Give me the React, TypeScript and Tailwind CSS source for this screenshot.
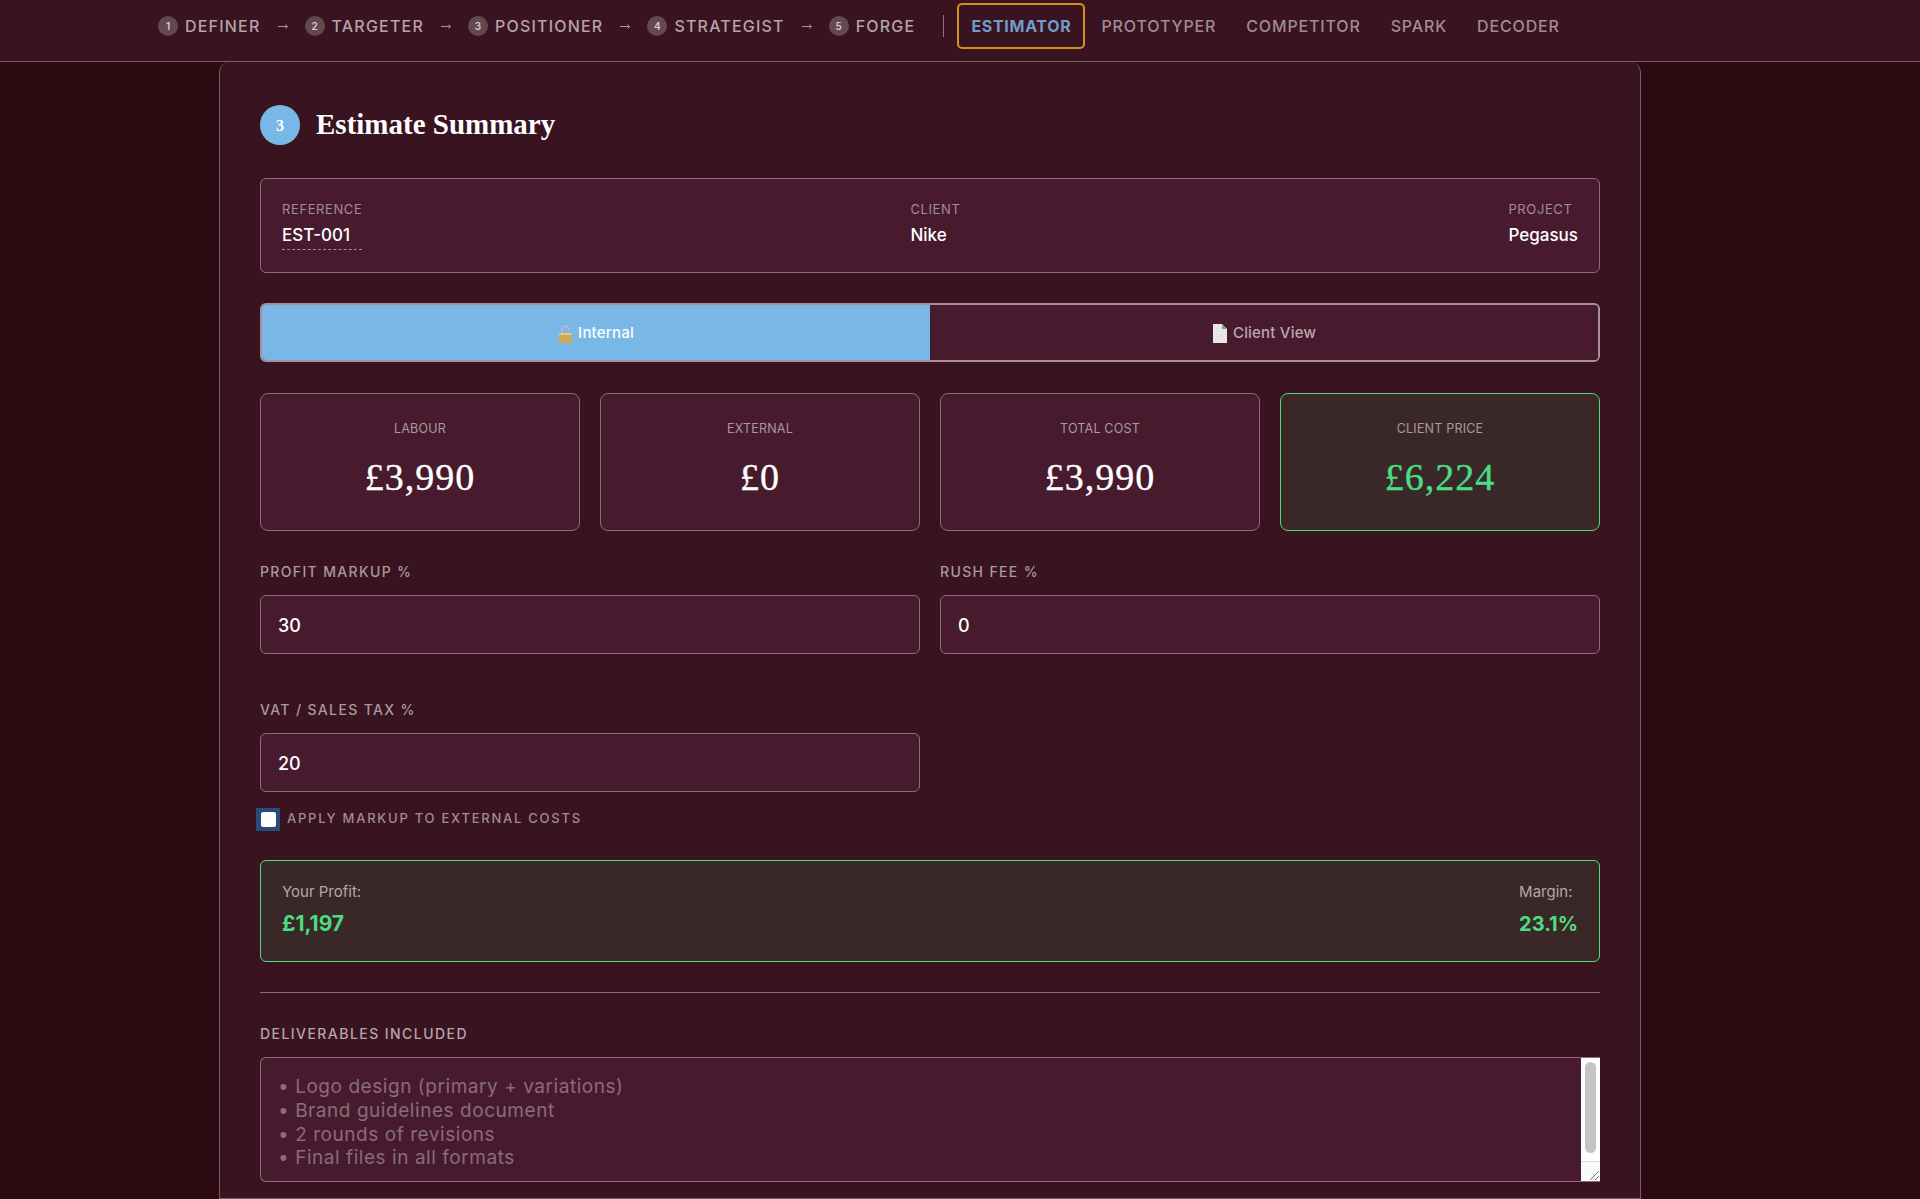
import React from "react";

const sans = "font-['Inter','Liberation_Sans',sans-serif]";
const serif = "font-['Liberation_Serif','DejaVu_Serif',serif]";

const steps = [
  { n: "1", label: "DEFINER" },
  { n: "2", label: "TARGETER" },
  { n: "3", label: "POSITIONER" },
  { n: "4", label: "STRATEGIST" },
  { n: "5", label: "FORGE" },
];

function Nav() {
  return (
    <nav className="flex h-[62px] shrink-0 items-center border-b border-[#7d5a69] bg-[#3a1320] pb-[9px] pl-[158px]">
      {steps.map((s, i) => (
        <React.Fragment key={s.n}>
          <div className="flex items-center gap-[7px]">
            <span className="flex h-[20px] w-[20px] items-center justify-center rounded-full bg-[#65484f] text-[10px] font-semibold text-[#d8ccd0]">
              {s.n}
            </span>
            <span className="text-[16px] font-medium leading-none tracking-[1.2px] text-[#b3a3aa]">{s.label}</span>
          </div>
          {i < steps.length - 1 && (
            <span className="flex w-[44px] items-center justify-center">
              <svg width="10" height="7" viewBox="0 0 10 7" fill="none" stroke="#a8979f" strokeWidth="1">
                <path d="M0 3.5h9.5M7.5 1.5l2 2-2 2" />
              </svg>
            </span>
          )}
        </React.Fragment>
      ))}
      <span className="ml-[28px] mr-[13px] h-[22px] w-px bg-[#8a7480]" />
      <span className="flex h-[46px] items-center rounded-[5px] border-2 border-[#d4921c] px-[12px] text-[16px] font-bold leading-none tracking-[0.7px] text-[#6f9cc8]">
        ESTIMATOR
      </span>
      <div className="ml-[16px] flex items-center gap-[30px] text-[16px] font-medium leading-none tracking-[0.85px] text-[#a08c95]">
        <span>PROTOTYPER</span>
        <span>COMPETITOR</span>
        <span>SPARK</span>
        <span>DECODER</span>
      </div>
    </nav>
  );
}

function Meta({ label, value, dashed }: { label: string; value: string; dashed?: boolean }) {
  return (
    <div>
      <div className="text-[13px] leading-[16px] tracking-[0.6px] text-[#a08c95]">{label}</div>
      <div className={`mt-[5px] text-[17px] font-medium leading-[26px] text-white ${dashed ? "border-b border-dashed border-[#a08c95] pb-[1px]" : ""}`}>
        {value}
      </div>
    </div>
  );
}

function Stat({ label, value, green }: { label: string; value: string; green?: boolean }) {
  return (
    <div
      className={`flex h-[138px] flex-col items-center rounded-[8px] border pt-[27px] ${
        green ? "border-[#4ade80] bg-[#3a2829]" : "border-[#8f6b7a] bg-[#471b2d]"
      }`}
    >
      <div className="text-[12.5px] leading-[16px] tracking-[0.2px] text-[#a89a9f]">{label}</div>
      <div
        className={`${serif} mt-[18px] text-[38px] leading-[44px] tracking-[1px] [-webkit-text-stroke:0.35px_currentColor] ${
          green ? "text-[#4ade80]" : "text-white"
        }`}
      >
        {value}
      </div>
    </div>
  );
}

function Field({ label, value }: { label: string; value: string }) {
  return (
    <div>
      <div className="text-[14px] font-medium leading-[16px] tracking-[1.35px] text-[#a89a9f]">{label}</div>
      <div className="mt-[15px] flex h-[59px] items-center rounded-[6px] border border-[#8f6b7a] bg-[#471b2d] px-[17px] pt-[1px] text-[18px] font-medium text-white">
        {value}
      </div>
    </div>
  );
}

function LockIcon() {
  return (
    <svg width="15" height="18" viewBox="0 0 15 18">
      <path d="M4 8V4.5a3.5 3.5 0 0 1 7 0V5" fill="none" stroke="#b9bcc4" strokeWidth="1.5" />
      <rect x="1" y="8" width="13" height="10" rx="1" fill="#c9ab55" />
      <rect x="1" y="8" width="13" height="2" fill="#e2cb7e" />
    </svg>
  );
}

function FileIcon() {
  return (
    <svg width="16" height="19" viewBox="0 0 16 19">
      <path d="M1 0h9l5 5v14H1z" fill="#e9e6e6" />
      <path d="M10 0v5h5z" fill="#9a9494" />
    </svg>
  );
}

export default function App() {
  return (
    <div className={`${sans} flex h-[1199px] flex-col overflow-hidden bg-[#2b0a12]`}>
      <Nav />
      <main className="ml-[219px] w-[1422px] flex-1 rounded-t-[10px] border border-t-0 border-[#7d5a69] bg-[#3a1320] px-[40px] pt-[43px]">
        <header className="flex h-[40px] items-center gap-[16px]">
          <span className={`${serif} flex h-[40px] w-[40px] items-center justify-center rounded-full bg-[#79b8e6] pt-[1px] text-[16px] font-bold text-white`}>
            3
          </span>
          <h1 className={`${serif} -mt-[2px] text-[29px] font-bold leading-none text-white`}>Estimate Summary</h1>
        </header>

        <section className="mt-[33px] flex h-[95px] items-start justify-between rounded-[6px] border border-[#8f6b7a] bg-[#471b2d] px-[21px] pt-[22px]">
          <Meta label="REFERENCE" value="EST-001" dashed />
          <Meta label="CLIENT" value="Nike" />
          <Meta label="PROJECT" value="Pegasus" />
        </section>

        <section className="mt-[30px] grid h-[59px] grid-cols-2 overflow-hidden rounded-[6px] border-2 border-[#a98f9b]">
          <button className="flex items-center justify-center gap-[5px] bg-[#79b8e6] pt-[2px] text-[15px] font-medium tracking-[0.2px] text-white">
            <LockIcon />
            Internal
          </button>
          <button className="flex items-center justify-center gap-[5px] bg-[#471b2d] pt-[2px] text-[15px] font-medium tracking-[0.2px] text-[#b9a9b0]">
            <FileIcon />
            Client View
          </button>
        </section>

        <section className="mt-[31px] grid grid-cols-4 gap-[20px]">
          <Stat label="LABOUR" value="£3,990" />
          <Stat label="EXTERNAL" value="£0" />
          <Stat label="TOTAL COST" value="£3,990" />
          <Stat label="CLIENT PRICE" value="£6,224" green />
        </section>

        <section className="mt-[33px] grid grid-cols-2 gap-x-[20px] gap-y-[48px]">
          <Field label="PROFIT MARKUP %" value="30" />
          <Field label="RUSH FEE %" value="0" />
          <Field label="VAT / SALES TAX %" value="20" />
        </section>

        <label className="mt-[16px] flex h-[23px] items-center gap-[7px]">
          <span className="-ml-[4px] flex h-[23px] w-[24px] items-center justify-center bg-[#2a4a78]">
            <span className="h-[15px] w-[15px] rounded-[2px] bg-white" />
          </span>
          <span className="-mt-[2px] text-[13px] font-medium tracking-[1.75px] text-[#a08c95]">APPLY MARKUP TO EXTERNAL COSTS</span>
        </label>

        <section className="mt-[29px] flex h-[102px] items-start justify-between rounded-[6px] border border-[#4ade80] bg-[#3a2829] px-[21px] pt-[21px]">
          <div>
            <div className="text-[15px] leading-[20px] text-[#b3a6aa]">Your Profit:</div>
            <div className="mt-[10px] text-[21px] font-bold leading-[24px] text-[#4ade80]">£1,197</div>
          </div>
          <div>
            <div className="text-[15px] leading-[20px] text-[#b3a6aa]">Margin:</div>
            <div className="mt-[10px] text-[20px] font-bold leading-[24px] text-[#4ade80]">23.1%</div>
          </div>
        </section>

        <hr className="mt-[30px] border-0 border-t border-[#8f6b7a]" />

        <div className="mt-[33px] text-[14px] font-medium leading-[16px] tracking-[1.45px] text-[#b3a6aa]">DELIVERABLES INCLUDED</div>

        <div className="mt-[15px] flex h-[125px] overflow-hidden rounded-l-[6px] border border-r-0 border-[#8f6b7a] bg-[#471b2d]">
          <textarea
            readOnly
            className="h-full flex-1 resize-none overflow-hidden bg-transparent px-[17px] pt-[17px] text-[19px] leading-[23.8px] tracking-[0.55px] text-[#8a6c7a] outline-none"
            value={"• Logo design (primary + variations)\n• Brand guidelines document\n• 2 rounds of revisions\n• Final files in all formats"}
          />
          <div className="flex w-[19px] flex-col bg-white">
            <div className="px-[4px] pt-[4px]">
              <div className="h-[91px] rounded-full bg-[#c4c4c4]" />
            </div>
            <div className="mt-[8px] flex flex-1 items-end justify-end border-t border-[#dedede] bg-[#fafafa]">
              <svg width="12" height="12" viewBox="0 0 12 12" fill="none" stroke="#777" strokeWidth="1">
                <path d="M2 11 11 2M7 11l4-4" />
              </svg>
            </div>
          </div>
        </div>
      </main>
    </div>
  );
}
